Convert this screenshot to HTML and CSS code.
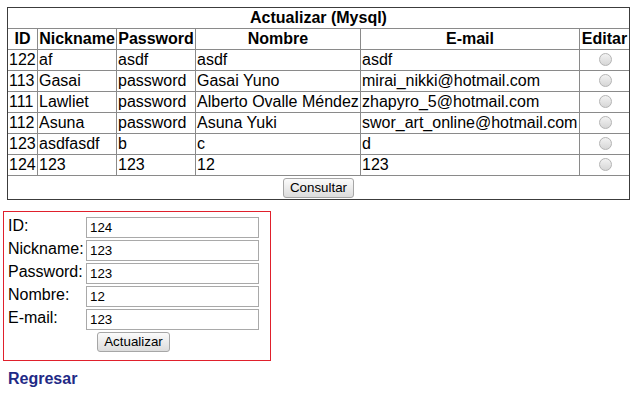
FILE: index.html
```html
<!DOCTYPE html>
<html>
<head>
<meta charset="utf-8">
<link rel="stylesheet" href="styles.css">
</head>
<body>
<div class="page">
  <table class="grid">
    <tr><th class="title" colspan="6">Actualizar (Mysql)</th></tr>
    <tr>
      <th class="c-id">ID</th><th class="c-nick">Nickname</th><th class="c-pass">Password</th>
      <th class="c-nom">Nombre</th><th class="c-mail">E-mail</th><th class="c-edit">Editar</th>
    </tr>
    <tr><td>122</td><td>af</td><td>asdf</td><td>asdf</td><td>asdf</td><td class="radio-cell"><span class="radio"></span></td></tr>
    <tr><td>113</td><td>Gasai</td><td>password</td><td>Gasai Yuno</td><td>mirai_nikki@hotmail.com</td><td class="radio-cell"><span class="radio"></span></td></tr>
    <tr><td>111</td><td>Lawliet</td><td>password</td><td>Alberto Ovalle Méndez</td><td>zhapyro_5@hotmail.com</td><td class="radio-cell"><span class="radio"></span></td></tr>
    <tr><td>112</td><td>Asuna</td><td>password</td><td>Asuna Yuki</td><td>swor_art_online@hotmail.com</td><td class="radio-cell"><span class="radio"></span></td></tr>
    <tr><td>123</td><td>asdfasdf</td><td>b</td><td>c</td><td>d</td><td class="radio-cell"><span class="radio"></span></td></tr>
    <tr><td>124</td><td>123</td><td>123</td><td>12</td><td>123</td><td class="radio-cell"><span class="radio"></span></td></tr>
    <tr><td class="btn-cell" colspan="6"><button class="btn" type="button">Consultar</button></td></tr>
  </table>

  <form class="edit-box">
    <div class="fields">
      <label class="lbl">ID:</label><input class="inp" type="text" value="124">
      <label class="lbl">Nickname:</label><input class="inp" type="text" value="123">
      <label class="lbl">Password:</label><input class="inp" type="text" value="123">
      <label class="lbl">Nombre:</label><input class="inp" type="text" value="12">
      <label class="lbl">E-mail:</label><input class="inp" type="text" value="123">
      <button class="btn submit" type="button">Actualizar</button>
    </div>
  </form>

  <a class="back" href="#">Regresar</a>
</div>
</body>
</html>
```

FILE: styles.css
```css
html, body {
  margin: 0;
  padding: 0;
  background: #ffffff;
}

body {
  font-family: "Liberation Sans", Arial, sans-serif;
  font-size: 16px;
  color: #000;
}

.page {
  padding: 7px 0 0 0;
}

.grid {
  margin-left: 7px;
  width: 623px;
  border: 1px solid #3c3c3c;
  border-spacing: 0;
  border-collapse: separate;
}

.grid th,
.grid td {
  padding: 1px;
  height: 18px;
  line-height: 18px;
  border: 0;
  border-left: 1px solid #8a8a8a;
  border-top: 1px solid #8a8a8a;
  white-space: nowrap;
}

.grid tr > :first-child {
  border-left: 0;
}

.grid tr:first-child > th {
  border-top: 0;
}

.grid th {
  font-weight: bold;
  text-align: center;
}

.grid td {
  text-align: left;
}

.c-id { width: 27px; }
.c-nick { width: 76px; }
.c-pass { width: 76px; }
.c-nom { width: 162px; }
.c-mail { width: 216px; }
.c-edit { width: 47px; }

.grid td.radio-cell {
  text-align: center;
}

.radio {
  display: inline-block;
  width: 11px;
  height: 11px;
  border: 1px solid #b4b4b4;
  border-radius: 50%;
  background: linear-gradient(#f2f2f2, #d6d6d6);
  vertical-align: middle;
  margin-top: -2px;
  margin-left: 1px;
}

.grid td.btn-cell {
  text-align: center;
  height: 21px;
  padding: 1px 1px 1px 1px;
}

.btn {
  font-family: "Liberation Sans", Arial, sans-serif;
  font-size: 13.33px;
  color: #000;
  height: 20px;
  padding: 0 6px;
  border: 1px solid #a6a6a6;
  border-radius: 3px;
  background: linear-gradient(#fbfbfb, #dcdcdc);
  line-height: 18px;
  vertical-align: top;
  margin: 0;
}

.edit-box {
  margin: 11px 0 0 3px;
  width: 262px;
  border: 1px solid #e0202c;
  padding: 5px 0 8px 4px;
  box-sizing: content-box;
}

.fields {
  display: grid;
  grid-template-columns: 76px 173px;
  column-gap: 2px;
  row-gap: 2px;
  width: 251px;
}

.lbl {
  font-size: 16px;
  line-height: 18px;
  align-self: start;
  white-space: nowrap;
}

.inp {
  box-sizing: border-box;
  width: 173px;
  height: 21px;
  margin: 0;
  padding: 1px 3px;
  border: 1px solid #a9a9a9;
  font-family: "Liberation Sans", Arial, sans-serif;
  font-size: 13.33px;
  color: #000;
}

.submit {
  grid-column: 1 / span 2;
  justify-self: center;
}

.back {
  display: inline-block;
  margin: 9px 0 0 8px;
  font-weight: bold;
  font-size: 16px;
  color: #1f2a86;
  text-decoration: none;
}
```
